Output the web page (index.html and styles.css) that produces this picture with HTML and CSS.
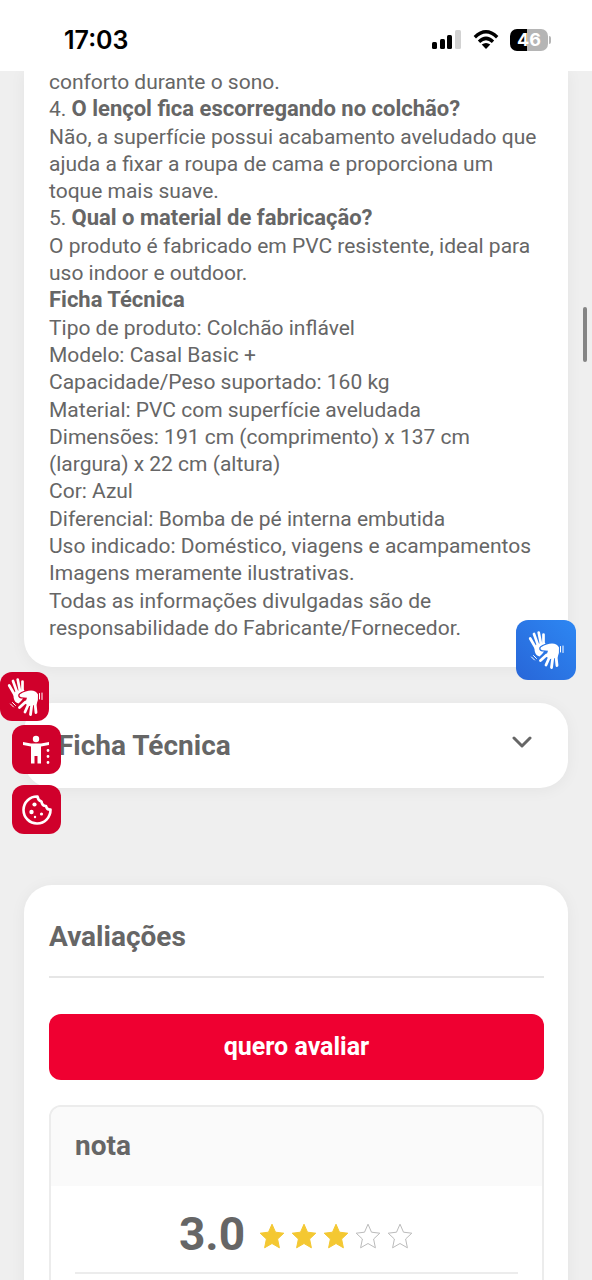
FILE: index.html
```html
<!DOCTYPE html>
<html lang="pt-BR">
<head>
<meta charset="utf-8">
<meta name="viewport" content="width=device-width, initial-scale=1">
<title>Colchão inflável</title>
<link rel="stylesheet" href="styles.css">
</head>
<body>
<svg class="sprite" aria-hidden="true">
  <symbol id="hands" viewBox="0 0 40 40">
    <g fill="none" stroke="currentColor" stroke-linecap="round">
      <path stroke-width="2.700" d="M9.500 17.500 4.200 8.500M12 15 8 4M15 14 12.700 2.500M17.500 13 17.500 4.500"/>
      <path stroke-width="2.800" d="M20.500 25 14.500 30.500M24 26 20 35M27 26 25.500 37.500M30 26 31 35.500"/>
      <path stroke-width="1" d="M34.500 16.500v5.500M37 16v6.500M5.500 27l3 3M7.500 25.500l3 3"/>
    </g>
    <path fill="currentColor" d="M8.300 17 11 14 18.800 12.500 19.500 13.800Q14.500 15.500 13.300 17.500 12.500 20.500 16 21.500L18 21.500Q16.500 24 13.500 26.500 9.500 25.500 8.700 21Z"/>
    <path fill="currentColor" d="M15 17.200Q21 13.500 26 13.500 31 13.500 33 17.500 33.500 23 31.500 27.500L24.500 29 19.500 26.500Q21 24.500 22 20.800L16.500 20.200Q13.500 19.500 15 17.200Z"/>
  </symbol>
  <symbol id="star" viewBox="0 0 28 28">
    <path stroke-linejoin="round" d="M14 2.200 17.500 10.200 25.800 11.200 19.600 17 21.400 25.800 14 21.500 6.600 25.800 8.400 17 2.200 11.200 10.500 10.200Z"/>
  </symbol>
</svg>

<header class="status">
  <time class="status-time">17:03</time>
  <div class="status-icons">
    <svg class="signal" viewBox="0 0 30 20" aria-label="Sinal"><rect x="0" y="12" width="5" height="7" rx="1.500"/><rect x="8" y="9" width="5" height="10" rx="1.500"/><rect x="15" y="5" width="5" height="14" rx="1.500"/><rect x="23" y="0" width="6" height="19" rx="1.500" fill="#d2d2d2"/></svg>
    <svg class="wifi" viewBox="0 0 26 20" aria-label="Wi-Fi"><g fill="none" stroke="#000" stroke-width="3.400"><path d="M1.800 7.200Q13-3.600 24.200 7.200"/><path d="M6 11.700Q13 5.100 20 11.700"/></g><path d="M8.700 14.600Q13 11.200 17.300 14.600L13 19Z"/></svg>
    <div class="battery"><span class="battery-level">46</span></div>
  </div>
</header>

<main class="page">
  <section class="card description">
    <p>conforto durante o sono.</p>
    <p>4. <strong>O lençol fica escorregando no colchão?</strong></p>
    <p>Não, a superfície possui acabamento aveludado que ajuda a fixar a roupa de cama e proporciona um toque mais suave.</p>
    <p>5. <strong>Qual o material de fabricação?</strong></p>
    <p>O produto é fabricado em PVC resistente, ideal para uso indoor e outdoor.</p>
    <p><strong>Ficha Técnica</strong></p>
    <p>Tipo de produto: Colchão inflável</p>
    <p>Modelo: Casal Basic +</p>
    <p>Capacidade/Peso suportado: 160 kg</p>
    <p>Material: PVC com superfície aveludada</p>
    <p>Dimensões: 191 cm (comprimento) x 137 cm (largura) x 22 cm (altura)</p>
    <p>Cor: Azul</p>
    <p>Diferencial: Bomba de pé interna embutida</p>
    <p>Uso indicado: Doméstico, viagens e acampamentos</p>
    <p>Imagens meramente ilustrativas.</p>
    <p>Todas as informações divulgadas são de responsabilidade do Fabricante/Fornecedor.</p>
  </section>

  <button class="card accordion" type="button" aria-expanded="false">
    <span>Ficha Técnica</span>
    <svg class="chevron" viewBox="0 0 20 12" aria-hidden="true"><path d="M2 2 10 10 18 2"/></svg>
  </button>

  <section class="card reviews">
    <h2 class="reviews-title">Avaliações</h2>
    <button class="rate" type="button">quero avaliar</button>
    <div class="score">
      <h3 class="score-title">nota</h3>
      <div class="score-body">
        <div class="score-row">
          <span class="score-value">3.0</span>
          <div class="stars" role="img" aria-label="3 de 5 estrelas">
            <svg class="star full"><use href="#star"/></svg>
            <svg class="star full"><use href="#star"/></svg>
            <svg class="star full"><use href="#star"/></svg>
            <svg class="star"><use href="#star"/></svg>
            <svg class="star"><use href="#star"/></svg>
          </div>
        </div>
      </div>
    </div>
  </section>
</main>

<button class="fab libras-blue" type="button" aria-label="Tradutor de Libras"><svg class="hands-icon"><use href="#hands"/></svg></button>
<button class="fab red libras-red" type="button" aria-label="Libras"><svg class="hands-icon"><use href="#hands"/></svg></button>
<button class="fab red access" type="button" aria-label="Acessibilidade">
  <svg class="tool-icon" viewBox="0 0 30 30"><circle cx="14" cy="4" r="3.200" fill="#fff"/><path fill="#fff" d="M1 7 9 8.500H19L27 7V10L19 11.500V28.500H15.500V21H12.500V28.500H9V11.500L1 10Z"/><path stroke="#fff" stroke-width="2.800" stroke-linecap="round" stroke-dasharray="0 6" d="M26 15.500V28"/></svg>
</button>
<button class="fab red cookies" type="button" aria-label="Cookies">
  <svg class="tool-icon" viewBox="0 0 30 30"><path fill="none" stroke="#fff" stroke-width="2.600" stroke-linejoin="round" d="M15.500 1.500A13.500 13.500 0 1 0 28.500 14.500Q24.500 15 24 11 20 11 19.500 6.500 16 5.500 15.500 1.500Z"/><g fill="#fff"><circle cx="12.500" cy="9.500" r="2.100"/><circle cx="9.500" cy="17" r="2.200"/><circle cx="13" cy="22" r="1.200"/><circle cx="19.500" cy="19" r="1.600"/></g></svg>
</button>
<div class="scroll-thumb" aria-hidden="true"></div>
</body>
</html>
```
FILE: styles.css
```css
* { box-sizing: border-box; }
html { height: 100%; }
body {
  margin: 0;
  height: 100%;
  display: flex;
  flex-direction: column;
  overflow: hidden;
  background: #efefef;
  color: #666;
  font-family: Roboto, "Liberation Sans", sans-serif;
}
p, h2, h3 { margin: 0; }
button { border: 0; font-family: inherit; cursor: pointer; }
.sprite { position: absolute; width: 0; height: 0; }

.status {
  display: flex;
  justify-content: space-between;
  align-items: center;
  flex: none;
  height: 71px;
  padding: 8px 41px 0 64px;
  background: #fff;
  color: #000;
}
.status-time { font: 600 25px Inter, sans-serif; }
.status-icons { display: flex; align-items: center; gap: 11px; }
.signal { width: 30px; height: 20px; }
.wifi { width: 26px; height: 20px; }
.battery { display: flex; align-items: center; gap: 1px; }
.battery::after {
  content: "";
  width: 2px;
  height: 8px;
  border-radius: 0 2px 2px 0;
  background: #b5b5b5;
}
.battery-level {
  width: 38px;
  border-radius: 7px;
  background: linear-gradient(to right, #000 46%, #b5b5b5 46%);
  color: #fff;
  font: 700 18px/22px Inter, sans-serif;
  text-align: center;
}

.page {
  flex: 1;
  min-height: 0;
  display: flex;
  flex-direction: column;
  padding: 0 24px;
  overflow: hidden;
}
.card {
  flex: none;
  border-radius: 28px;
  background: #fff;
  box-shadow: 0 2px 16px rgba(0, 0, 0, .05);
}
.description {
  margin: -2px 0 36px;
  padding: 0 24px 25px 25px;
  border-radius: 0 0 28px 28px;
  font-size: 21px;
  line-height: 1.3;
}
.description strong { font-size: 22px; line-height: 1; }
.accordion {
  display: flex;
  justify-content: space-between;
  align-items: center;
  height: 85px;
  margin-bottom: 97px;
  padding: 0 36px 0 34px;
  color: #666;
  font-size: 28px;
  font-weight: 700;
}
.chevron { width: 20px; height: 12px; margin-bottom: 8px; fill: none; stroke: #666; stroke-width: 3; stroke-linecap: round; stroke-linejoin: round; }

.reviews { padding: 32px 24px 32px 25px; }
.reviews-title {
  padding-bottom: 19px;
  border-bottom: 2px solid #e6e6e6;
  font-size: 28px;
  line-height: 40px;
  font-weight: 700;
}
.rate {
  width: 100%;
  height: 66px;
  margin: 36px 0 25px;
  padding: 0 0 2px;
  border-radius: 12px;
  background: #ef0031;
  color: #fff;
  font-size: 25px;
  font-weight: 700;
}
.score { border: 2px solid #ececec; border-radius: 12px; overflow: hidden; }
.score-title {
  padding: 19px 24px 20px;
  background: #fafafa;
  font-size: 28px;
  line-height: 40px;
  font-weight: 700;
}
.score-body { padding: 16px 24px 40px; }
.score-row {
  display: flex;
  justify-content: center;
  align-items: center;
  gap: 13px;
  padding-bottom: 6px;
  border-bottom: 2px solid #ececec;
}
.score-value { font-size: 46px; line-height: 64px; font-weight: 700; }
.stars { display: flex; gap: 4px; padding-top: 4px; }
.star { width: 28px; height: 28px; fill: none; stroke: #bbb; stroke-width: 1; }
.star.full { fill: #f4c832; stroke: #f4c832; }

.fab {
  position: fixed;
  display: flex;
  align-items: center;
  justify-content: center;
  padding: 0;
  border-radius: 12px;
  color: #fff;
}
.red { width: 49px; height: 49px; background: #d0002b; }
.hands-icon { width: 40px; height: 40px; }
.tool-icon { width: 30px; height: 30px; }
.libras-blue { top: 620px; right: 16px; width: 60px; height: 60px; background: linear-gradient(to top right, #2866d8, #2d87f3); }
.libras-red { top: 672px; left: 0; }
.access { top: 725px; left: 12px; }
.cookies { top: 785px; left: 12px; }
.scroll-thumb { position: fixed; top: 307px; right: 5px; width: 4px; height: 55px; border-radius: 2px; background: #858585; }
```
